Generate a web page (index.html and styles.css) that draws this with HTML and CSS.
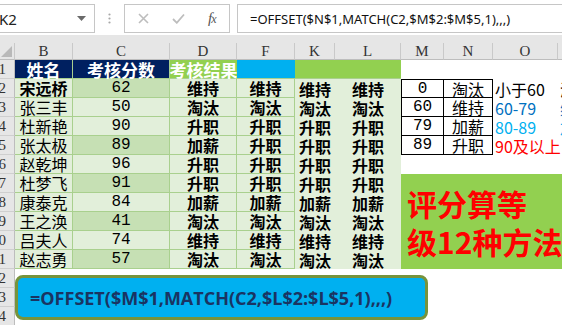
FILE: index.html
```html
<!DOCTYPE html>
<html lang="zh">
<head>
<meta charset="utf-8">
<title>评分算等级</title>
<link rel="stylesheet" href="styles.css">
</head>
<body>
<div class="fbar">
  <div class="namebox"><span>K2</span><svg class="dd" width="9" height="5" viewBox="0 0 9 5"><path d="M0 0H9L4.5 5Z" fill="#6a6a6a"/></svg></div>
  <div class="dots"><svg width="3" height="11" viewBox="0 0 3 11"><circle cx="1.5" cy="1.5" r="1.1" fill="#a8a8a8"/><circle cx="1.5" cy="5.5" r="1.1" fill="#a8a8a8"/><circle cx="1.5" cy="9.5" r="1.1" fill="#a8a8a8"/></svg></div>
  <div class="btns">
    <svg width="11" height="11" viewBox="0 0 11 11"><path d="M1 1L10 10M10 1L1 10" stroke="#bdbdbd" stroke-width="1.6"/></svg>
    <svg width="13" height="11" viewBox="0 0 13 11"><path d="M1 6L4.8 9.8L12 1.5" stroke="#bdbdbd" stroke-width="1.8" fill="none"/></svg>
    <span class="fx">f<span class="x">x</span></span>
  </div>
  <div class="formula">=OFFSET($N$1,MATCH(C2,$M$2:$M$5,1),,,)</div>
</div>
<div class="band"></div>
<div class="sheet">
  <div class="ch corner"><svg width="11" height="11" viewBox="0 0 11 11"><path d="M11 0V11H0Z" fill="#b9b9b9"/></svg></div>
  <div class="ch">B</div><div class="ch">C</div><div class="ch">D</div><div class="ch">F</div><div class="ch">K</div><div class="ch">L</div><div class="ch">M</div><div class="ch">N</div><div class="ch">O</div><div class="ch last"></div>

  <div class="green-box"><span>评分算等</span><span>级12种方法</span></div>

  <div class="rh"><span>1</span></div>
  <div class="c h-navy g">姓名</div><div class="c h-navy g">考核分数</div><div class="c h-green">考核结果</div><div class="c h-blue"></div><div class="c h-green"></div><div class="c h-green"></div>

  <div class="rh"><span>2</span></div>
  <div class="c nm g bold-name">宋远桥</div><div class="c sc g dk">62</div><div class="c rs g">维持</div><div class="c rs g">维持</div><div class="c rs">维持</div><div class="c rs">维持</div>
  <div class="c tm tt">0</div><div class="c tn tt">淘汰</div><div class="c to">小于60</div><div class="c to">淘汰</div>

  <div class="rh"><span>3</span></div>
  <div class="c nm g">张三丰</div><div class="c sc g">50</div><div class="c rs g">淘汰</div><div class="c rs g">淘汰</div><div class="c rs">淘汰</div><div class="c rs">淘汰</div>
  <div class="c tm">60</div><div class="c tn">维持</div><div class="c to blue">60-79</div><div class="c to blue">维持</div>

  <div class="rh"><span>4</span></div>
  <div class="c nm g">杜新艳</div><div class="c sc g">90</div><div class="c rs g">升职</div><div class="c rs g">升职</div><div class="c rs">升职</div><div class="c rs">升职</div>
  <div class="c tm">79</div><div class="c tn">加薪</div><div class="c to sky">80-89</div><div class="c to sky">加薪</div>

  <div class="rh"><span>5</span></div>
  <div class="c nm g">张太极</div><div class="c sc g dk">89</div><div class="c rs g">加薪</div><div class="c rs g">升职</div><div class="c rs">升职</div><div class="c rs">升职</div>
  <div class="c tm">89</div><div class="c tn">升职</div><div class="c to red">90及以上</div>

  <div class="rh"><span>6</span></div>
  <div class="c nm g">赵乾坤</div><div class="c sc g">96</div><div class="c rs g">升职</div><div class="c rs g">升职</div><div class="c rs">升职</div><div class="c rs">升职</div>

  <div class="rh"><span>7</span></div>
  <div class="c nm g">杜梦飞</div><div class="c sc g dk">91</div><div class="c rs g">升职</div><div class="c rs g">升职</div><div class="c rs">升职</div><div class="c rs">升职</div>

  <div class="rh"><span>8</span></div>
  <div class="c nm g">康泰克</div><div class="c sc g">84</div><div class="c rs g">加薪</div><div class="c rs g">加薪</div><div class="c rs">加薪</div><div class="c rs">加薪</div>

  <div class="rh"><span>9</span></div>
  <div class="c nm g">王之涣</div><div class="c sc g dk">41</div><div class="c rs g">淘汰</div><div class="c rs g">淘汰</div><div class="c rs">淘汰</div><div class="c rs">淘汰</div>

  <div class="rh"><span>10</span></div>
  <div class="c nm g">吕夫人</div><div class="c sc g">74</div><div class="c rs g">维持</div><div class="c rs g">维持</div><div class="c rs">维持</div><div class="c rs">维持</div>

  <div class="rh"><span>11</span></div>
  <div class="c nm g">赵志勇</div><div class="c sc g dk">57</div><div class="c rs g">淘汰</div><div class="c rs g">淘汰</div><div class="c rs">淘汰</div><div class="c rs">淘汰</div>

  <div class="rh"><span>12</span></div>
  <div class="rh"><span>13</span></div>
  <div class="rh"><span>14</span></div>
</div>
<div class="callout">=OFFSET($M$1,MATCH(C2,$L$2:$L$5,1),,,)</div>
</body>
</html>
```

FILE: styles.css
```css
* { box-sizing: border-box; margin: 0; padding: 0; }
html, body { width: 562px; height: 325px; overflow: hidden; background: #fff; }
body { position: relative; font-family: "Noto Sans CJK SC", "Noto Sans", sans-serif; color: #000; }

/* formula bar */
.fbar { height: 35px; display: flex; align-items: flex-start; padding-top: 4px; background: #fff; }
.namebox { margin-left: -8px; width: 103px; height: 29px; border: 1px solid #c6c6c6; display: flex; align-items: center; justify-content: space-between; padding: 0 8px 0 6px; font: 15px "Noto Sans", sans-serif; color: #222; }
.dots { width: 29px; height: 29px; display: flex; align-items: center; justify-content: center; }
.btns { width: 106px; height: 29px; border: 1px solid #c6c6c6; display: flex; align-items: center; gap: 23px; padding-left: 13px; }
.fx { font: italic 15px "Liberation Serif", serif; color: #555; letter-spacing: -1px; }
.fx .x { font-size: 12px; }
.formula { margin-left: 7px; flex: 1; height: 29px; border: 1px solid #c6c6c6; border-right: none; display: flex; align-items: center; padding-left: 12px; font: 13px "Noto Sans", sans-serif; color: #111; white-space: nowrap; }

.band { height: 8px; background: #e6e6e6; }

/* sheet */
.sheet { display: grid; grid-template-columns: 15px 58px 97px 67px 58px 40px 66px 43px 49px 65px 60px; grid-template-rows: 17px repeat(14, 19px); }
.ch { background: #e6e6e6; border-right: 1px solid #c9c9c9; border-bottom: 1px solid #bdbdbd; display: flex; align-items: center; justify-content: center; font: 15px "Liberation Serif", serif; line-height: 1; color: #333; }
.ch.last { border-right: none; }
.corner { align-items: flex-end; justify-content: flex-end; padding: 0 2px 2px 0; }
.rh { grid-column: 1; background: #e6e6e6; border-right: 1px solid #bdbdbd; border-bottom: 1px solid #cfcfcf; display: flex; align-items: center; justify-content: flex-end; padding-right: 8px; overflow: hidden; font: 15px "Liberation Serif", serif; line-height: 1; color: #333; white-space: nowrap; }

.c { display: flex; align-items: center; justify-content: center; white-space: nowrap; background: #e2efda; line-height: 1; }
.g { border-right: 1px solid #a9d08e; border-bottom: 1px solid #a9d08e; }
.h-navy { background: #002060; color: #fff; font-size: 17px; font-weight: 700; }
.h-green { background: #92d050; color: #fff; font-size: 17px; font-weight: 700; border-bottom: 1px solid #a9d08e; }
.h-blue { background: #00b0f0; border-bottom: 1px solid #a9d08e; }
.nm { font-size: 16px; }
.bold-name { font-weight: 700; }
.sc { font: 16px "Liberation Mono", monospace; line-height: 1; }
.dk { background: #c6e0b4; }
.rs { font-size: 16px; font-weight: 700; }

/* lookup table */
.tm, .tn, .to { background: #fff; font-size: 16px; }
.tm { font: 16px "Liberation Mono", monospace; line-height: 1; border-left: 1px solid #000; border-right: 1px solid #000; border-bottom: 1px solid #000; }
.tn { border-right: 1px solid #000; border-bottom: 1px solid #000; }
.tt { border-top: 1px solid #000; }
.to { justify-content: flex-start; padding-left: 2px; }
.blue { color: #0070c0; }
.sky { color: #00b0f0; }
.red { color: #ff0000; }

.green-box { grid-column: 8 / 12; grid-row: 8 / 13; background: #92d050; display: flex; flex-direction: column; justify-content: center; gap: 6px; padding-left: 6px; color: #ff0000; font-size: 30px; font-weight: 700; line-height: 32px; white-space: nowrap; }

/* callout shape */
.callout { position: absolute; left: 15px; top: 275px; width: 413px; height: 45px; border: 3px solid #77933c; border-radius: 8px; background: #00b0f0; display: flex; align-items: center; padding-left: 12px; font: 700 18px "Open Sans", sans-serif; color: #1a3462; white-space: nowrap; }
```
